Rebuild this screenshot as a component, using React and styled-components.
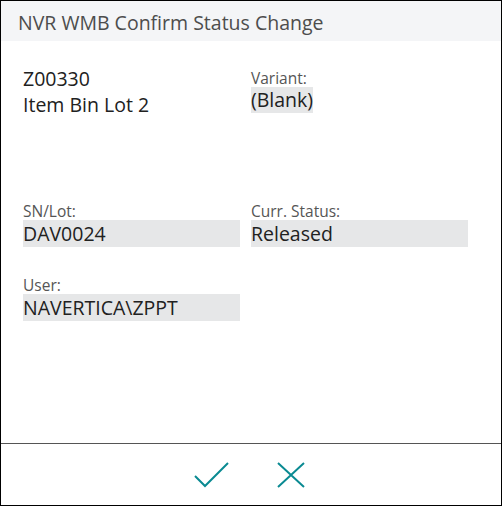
import React from "react";
import styled, { createGlobalStyle } from "styled-components";

const GlobalStyle = createGlobalStyle`
  html, body {
    margin: 0;
    padding: 0;
    background: #fff;
  }
  body {
    font-family: "Open Sans", "Noto Sans", sans-serif;
  }
`;

const Window = styled.div`
  width: 502px;
  height: 506px;
  box-sizing: border-box;
  border: 1px solid #000;
  display: flex;
  flex-direction: column;
  background: #fff;
`;

const Header = styled.div`
  height: 40px;
  box-sizing: border-box;
  background: #f4f5f7;
  padding: 3px 0 0 17px;
  font-size: 19.5px;
  line-height: 37px;
  color: #4d4d4d;
  white-space: nowrap;
`;

const Body = styled.div`
  flex: 1;
  padding: 25px 0 0 22px;
  display: grid;
  grid-template-columns: 217px 217px;
  column-gap: 11px;
  align-content: start;
`;

const Cell = styled.div`
  margin-top: ${(p) => p.$top || 0}px;
`;

const Plain = styled.div`
  font-size: 19.5px;
  line-height: 26px;
  color: #212121;
`;

const Label = styled.div`
  font-size: 15.5px;
  line-height: 18px;
  color: #555;
`;

const Value = styled.div`
  background: #e6e7e8;
  font-size: 19.5px;
  line-height: 27px;
  height: 27px;
  color: #212121;
  white-space: nowrap;
  ${(p) => p.$inline && "display: inline-block; height: 26px; line-height: 26px;"}
`;

const Footer = styled.div`
  height: 61px;
  border-top: 1px solid #555;
  display: flex;
  justify-content: center;
  align-items: center;
`;

const ActionButton = styled.button`
  width: 79px;
  height: 40px;
  border: none;
  background: transparent;
  padding: 0;
  display: flex;
  align-items: center;
  justify-content: center;
  cursor: pointer;
`;

const Check = () => (
  <svg width="35" height="26" viewBox="0 0 35 26" fill="none">
    <path d="M1 14 L11 24 L34 1" stroke="#0a8a92" strokeWidth="2" />
  </svg>
);

const Cross = () => (
  <svg width="28" height="26" viewBox="0 0 28 26" fill="none">
    <path d="M1 1 L27 25 M27 1 L1 25" stroke="#0a8a92" strokeWidth="2" />
  </svg>
);

export default function App() {
  return (
    <>
      <GlobalStyle />
      <Window>
        <Header>NVR WMB Confirm Status Change</Header>
        <Body>
          <Cell>
            <Plain>Z00330</Plain>
            <Plain>Item Bin Lot 2</Plain>
          </Cell>
          <Cell $top={3}>
            <Label>Variant:</Label>
            <Value $inline>(Blank)</Value>
          </Cell>
          <Cell $top={84}>
            <Label>SN/Lot:</Label>
            <Value>DAV0024</Value>
          </Cell>
          <Cell $top={84}>
            <Label>Curr. Status:</Label>
            <Value>Released</Value>
          </Cell>
          <Cell $top={29}>
            <Label>User:</Label>
            <Value>NAVERTICA\ZPPT</Value>
          </Cell>
        </Body>
        <Footer>
          <ActionButton aria-label="OK">
            <Check />
          </ActionButton>
          <ActionButton aria-label="Cancel">
            <Cross />
          </ActionButton>
        </Footer>
      </Window>
    </>
  );
}
